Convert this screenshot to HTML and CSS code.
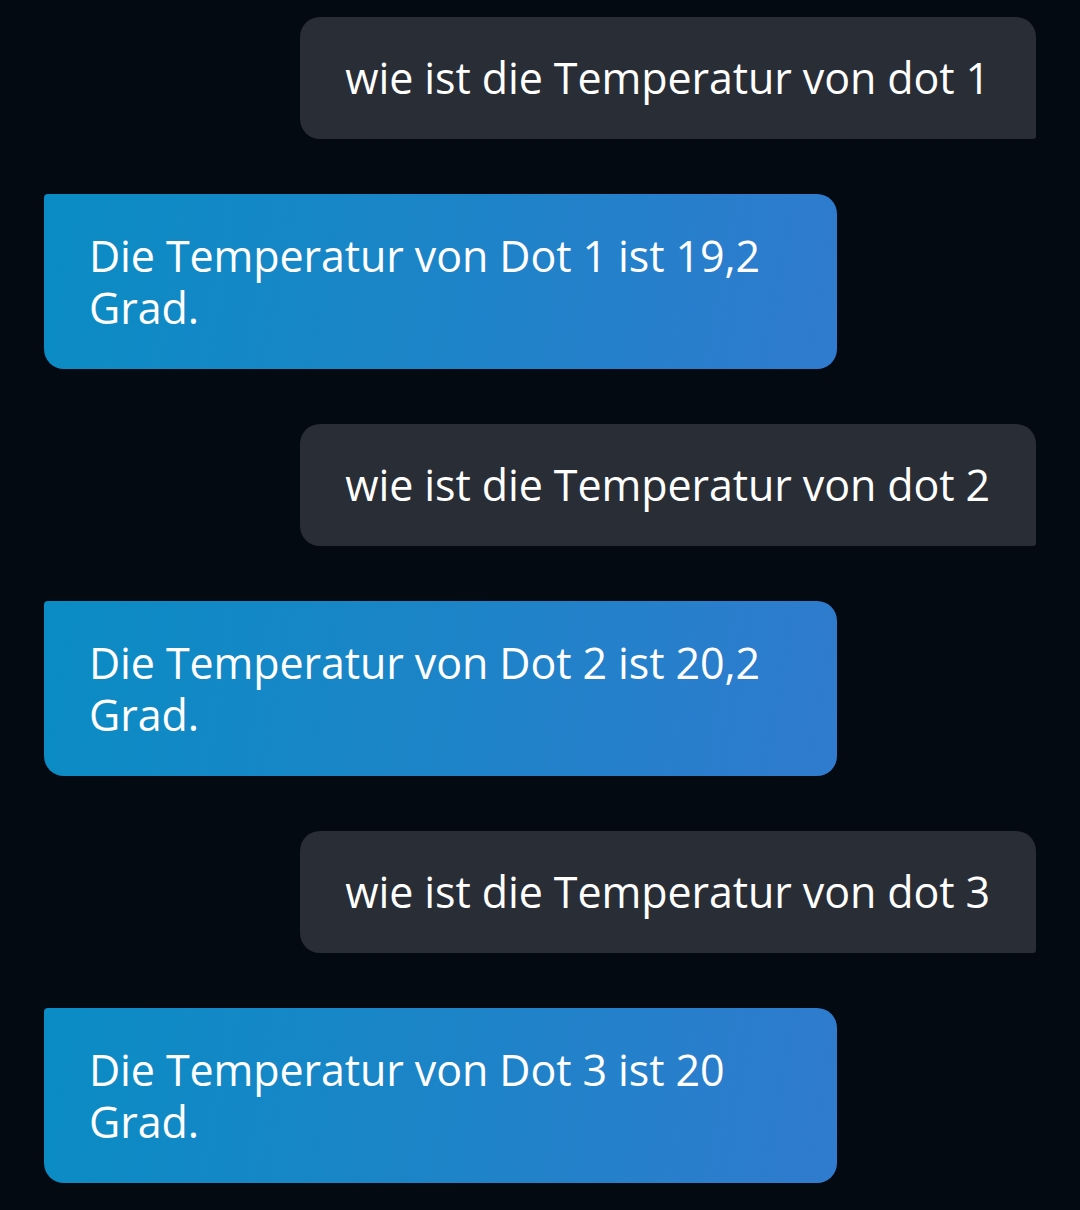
FILE: index.html
```html
<!DOCTYPE html>
<html>
<head>
<meta charset="utf-8">
<link rel="stylesheet" href="styles.css">
</head>
<body>
<div class="chat">
  <div class="msg user">wie ist die Temperatur von dot 1</div>
  <div class="msg bot">Die Temperatur von Dot 1 ist 19,2 Grad.</div>
  <div class="msg user">wie ist die Temperatur von dot 2</div>
  <div class="msg bot">Die Temperatur von Dot 2 ist 20,2 Grad.</div>
  <div class="msg user">wie ist die Temperatur von dot 3</div>
  <div class="msg bot">Die Temperatur von Dot 3 ist 20 Grad.</div>
</div>
</body>
</html>
```

FILE: styles.css
```css
html, body {
  margin: 0;
  background: #030a12;
}

.chat {
  display: flex;
  flex-direction: column;
  gap: 55px;
  padding: 17px 44px 0 44px;
  font-family: "Open Sans", "Noto Sans", sans-serif;
  font-size: 43px;
  line-height: 52px;
  letter-spacing: -0.1px;
  color: #fff;
}

.msg {
  box-sizing: border-box;
  padding: 35px 45px;
}

.user {
  align-self: flex-end;
  background: #292d35;
  border-radius: 20px 20px 3px 20px;
  padding-right: 46px;
}

.bot {
  align-self: flex-start;
  width: 793px;
  background: linear-gradient(100deg, #0a8cc4 0%, #1e83c8 55%, #307bcf 100%);
  border-radius: 4px 20px 20px 20px;
  padding-top: 36px;
  padding-bottom: 35px;
}
```
